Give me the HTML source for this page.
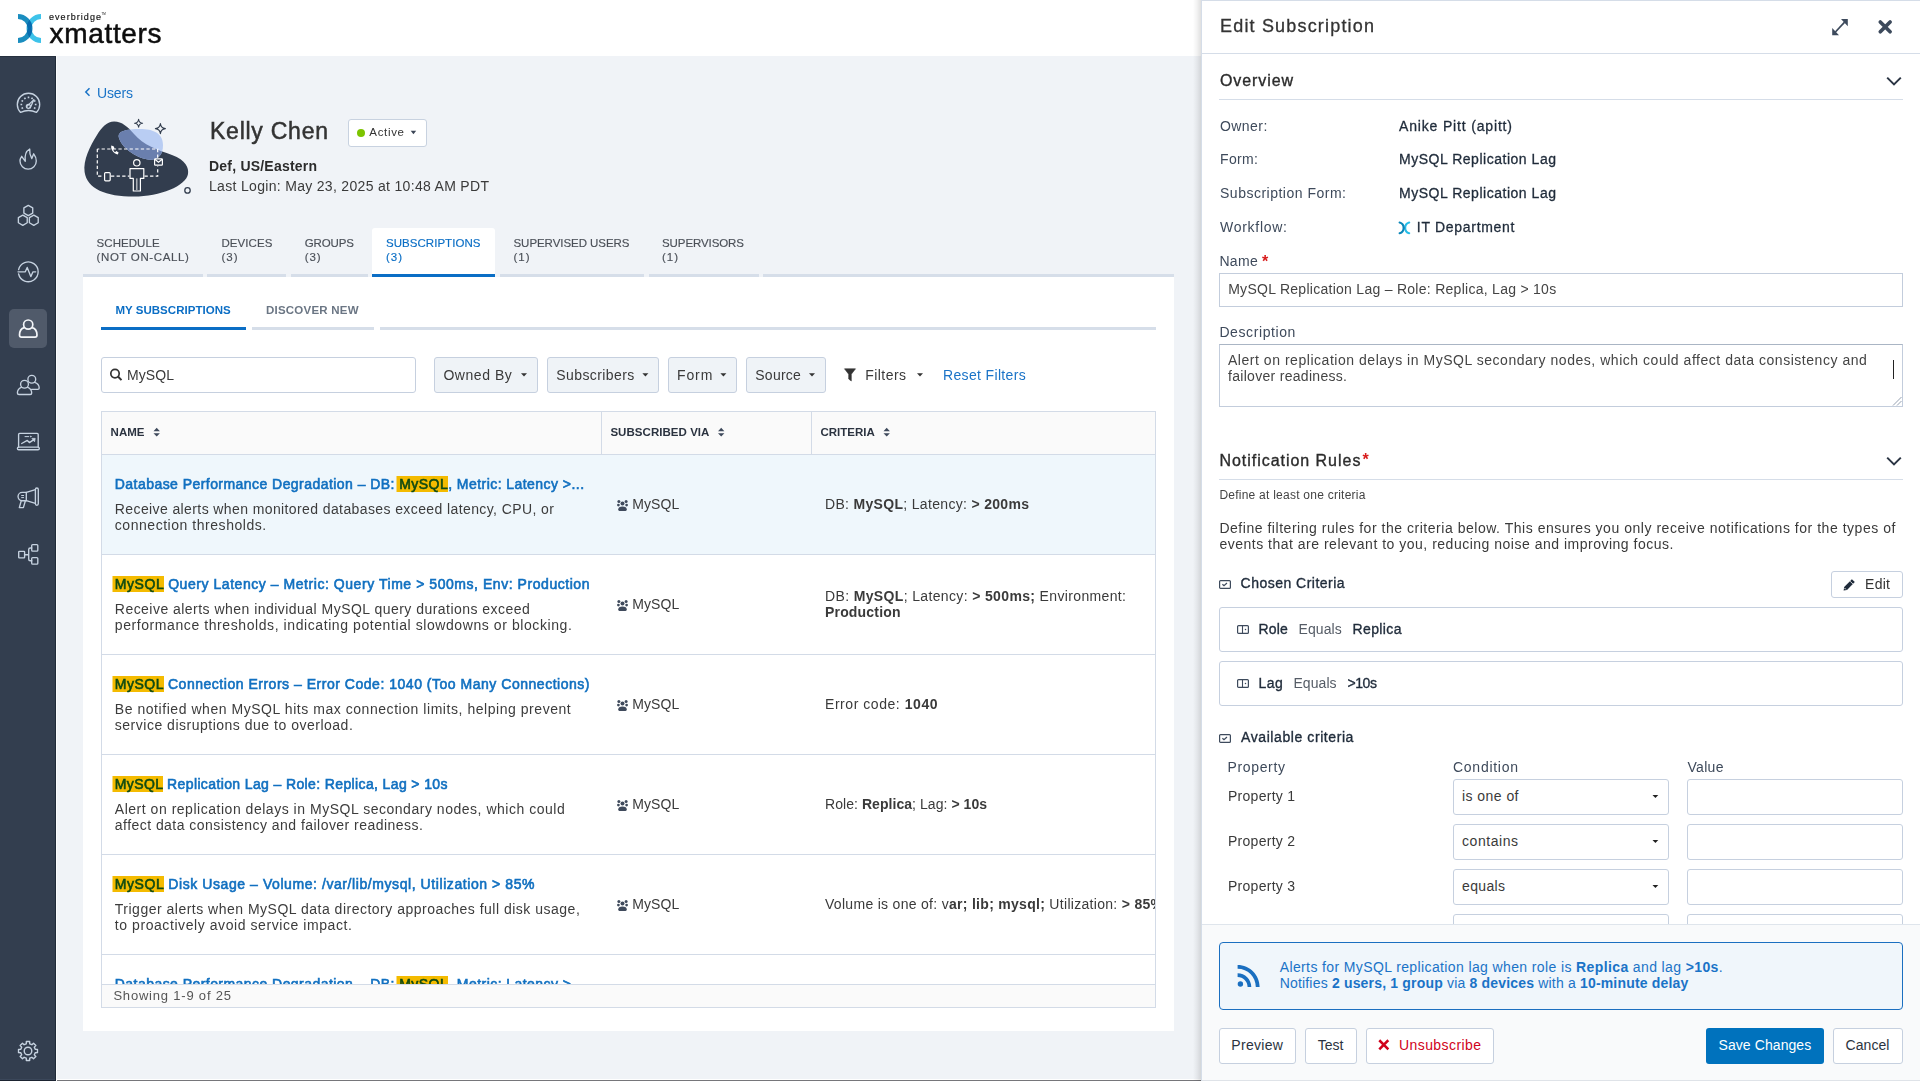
<!DOCTYPE html><html><head><meta charset="utf-8"><style>
html,body{margin:0;padding:0;}
body{width:1920px;height:1081px;overflow:hidden;position:relative;background:#f0f3f7;font-family:"Liberation Sans",sans-serif;-webkit-font-smoothing:antialiased;}
.t{position:absolute;white-space:nowrap;}
b{font-weight:bold;}
svg{position:absolute;overflow:visible;}
</style></head><body>
<div style="position:absolute;left:0px;top:0px;width:1920px;height:56px;background:#fff"></div>
<svg style="left:0;top:0" width="60" height="56">
<defs><clipPath id="lc"><rect x="17" y="14" width="25" height="29"/></clipPath></defs>
<g clip-path="url(#lc)" fill="none" stroke-width="5">
<path d="M41 16.5 A12 12 0 0 0 41 40.5" stroke="#3ec3ea"/>
<path d="M18 16.5 A12 12 0 0 1 18 40.5" stroke="#1a8dbf" style="mix-blend-mode:multiply"/>
</g></svg>
<div class="t" style="left:49px;top:12px;font-size:9px;line-height:10px;letter-spacing:1.052px;color:#111;-webkit-text-stroke:0.15px #111;">everbridge</div>
<div class="t" style="left:101.5px;top:13px;font-size:3px;line-height:3px;color:#111">TM</div>
<div class="t" style="left:49.6px;top:18px;font-size:28px;line-height:32px;letter-spacing:0.664px;color:#0d0d0d;-webkit-text-stroke:0.5px #0d0d0d;">xmatters</div>
<div style="position:absolute;left:0px;top:56px;width:56px;height:1025px;background:#333e4f"></div>
<div style="position:absolute;left:55px;top:56px;width:1px;height:1025px;background:#1f2a38"></div>
<div style="position:absolute;left:0px;top:56px;width:56px;height:1px;background:#27313f"></div>
<div style="position:absolute;left:56px;top:56px;width:1px;height:1025px;background:#fbfcfd"></div>
<div style="position:absolute;left:9px;top:309px;width:38px;height:39px;background:#505a6a;border-radius:5px"></div>
<svg style="left:0;top:0" width="56" height="600"><g fill="none" stroke="#c6d2e0" stroke-width="1.35" stroke-linecap="round" stroke-linejoin="round">
<path d="M20.6 112.4 A11.2 11.2 0 1 1 36.4 112.4 Q28.5 108.6 20.6 112.4 Z"/>
<path d="M23.04 107.65 L21.57 108.50 M22.20 104.50 L20.50 104.50 M23.04 101.35 L21.57 100.50 M25.35 99.04 L24.50 97.57 M28.50 98.20 L28.50 96.50 M31.65 99.04 L32.50 97.57 M33.96 101.35 L35.43 100.50 M34.80 104.50 L36.50 104.50 M33.96 107.65 L35.43 108.50" stroke-width="1.6" stroke-linecap="butt"/>
<path d="M26.6 106.6 L33.9 99.6 L30.2 107.9" stroke-width="1.3"/>
<circle cx="28.4" cy="106.3" r="2"/>
</g>
<g fill="none" stroke="#c6d2e0" stroke-width="1.35" stroke-linecap="round" stroke-linejoin="round">
<path d="M21.7 156.3 L25.3 161.3 C 24.6 156, 25.6 151.2, 29.7 149 C 29.4 153, 30.4 156.2, 31.8 158.6 L33.7 153.8 C 35.4 156, 36.3 158.8, 36.3 161 A 8.15 8.15 0 0 1 20 161 C 20 159.5, 20.6 157.8, 21.7 156.3 Z"/>
</g>
<g fill="none" stroke="#c6d2e0" stroke-width="1.35" stroke-linecap="round" stroke-linejoin="round">
<path d="M28.30 205.40 L32.72 207.95 L32.72 213.05 L28.30 215.60 L23.88 213.05 L23.88 207.95 Z"/>
<path d="M22.80 215.10 L27.22 217.65 L27.22 222.75 L22.80 225.30 L18.38 222.75 L18.38 217.65 Z"/>
<path d="M33.80 215.10 L38.22 217.65 L38.22 222.75 L33.80 225.30 L29.38 222.75 L29.38 217.65 Z"/>
</g>
<g fill="none" stroke="#c6d2e0" stroke-width="1.35" stroke-linecap="round" stroke-linejoin="round">
<path d="M18.6 269.6 A 9.9 9.9 0 1 1 18.6 274"/>
<path d="M18 271.8 H25.3 L27.2 267.4 L30.8 276.6 L33 271.8 H35.7"/>
</g>
<g fill="none" stroke="#f4f6f9" stroke-width="1.7" stroke-linejoin="round">
<circle cx="28.2" cy="324.6" r="4.6"/>
<path d="M24.3 327.6 C 21 328.5, 19.5 331, 19.5 335 C 19.5 336.5, 20.2 337.2, 21.5 337.2 H 35 C 36.3 337.2, 37 336.5, 37 335 C 37 331, 35.5 328.5, 32.1 327.6"/>
</g>
<g fill="none" stroke="#c6d2e0" stroke-width="1.35" stroke-linecap="round" stroke-linejoin="round">
<circle cx="31.8" cy="379.2" r="3.9"/>
<path d="M34.6 382.3 C 37.6 383.2, 39.2 385.6, 39.2 388 C 39.2 388.9, 38.7 389.4, 37.8 389.4 H 31.5"/>
<circle cx="24.5" cy="384.3" r="3.9"/>
<path d="M21.3 387.3 C 18.6 388.3, 17.4 390.6, 17.4 393 C 17.4 394, 18 394.5, 19 394.5 H 30.2 C 31.2 394.5, 31.7 394, 31.7 393 C 31.7 390.6, 30.4 388.3, 27.7 387.3"/>
</g>
<g fill="none" stroke="#c6d2e0" stroke-width="1.35" stroke-linecap="round" stroke-linejoin="round">
<path d="M18.6 447 V434.4 Q18.6 433.4 19.6 433.4 H37.2 Q38.2 433.4 38.2 434.4 V447"/>
<rect x="17.4" y="447.1" width="21.9" height="2.6" rx="1.3"/>
<path d="M21.7 443.5 L27.3 440.4 L29.4 442.6 L34.2 439.4" stroke-width="1.4"/>
<path d="M32.3 438.4 L35.2 438.4 L34.6 441.4 Z" fill="#c6d2e0" stroke-width="0.8"/>
<path d="M25 436.6 H28.6" stroke-width="1"/>
<circle cx="30.7" cy="436.6" r="0.5" fill="#c6d2e0" stroke-width="0.6"/>
</g>
<g fill="none" stroke="#c6d2e0" stroke-width="1.35" stroke-linecap="round" stroke-linejoin="round">
<path d="M26.3 492.4 L35.4 489.7 M26.3 500.7 L35.4 503.4"/>
<rect x="35.4" y="488" width="2.9" height="17.3" rx="1.45"/>
<path d="M26.3 492.4 V500.7 H22.2 A4.15 4.15 0 0 1 22.2 492.4 Z"/>
<path d="M21.2 501 L19.3 507.6 H23.4 L25.3 501"/>
<path d="M21.6 495.5 H23.6 M21.6 497.6 H23.6" stroke-width="1"/>
</g>
<g fill="none" stroke="#c6d2e0" stroke-width="1.35" stroke-linecap="round" stroke-linejoin="round">
<rect x="18.7" y="551.4" width="5.9" height="6.4" rx="0.6"/>
<rect x="31.7" y="544.6" width="6.1" height="6.6" rx="1"/>
<rect x="31.7" y="557.6" width="6.1" height="6.6" rx="1"/>
<path d="M24.6 554.7 H28.7 M31.7 548 H30.2 Q28.7 548 28.7 549.5 V559.2 Q28.7 560.7 30.2 560.7 H31.7"/>
</g>
</svg>
<svg style="left:0;top:1030" width="56" height="40"><g fill="none" stroke="#c6d2e0" stroke-width="1.4" stroke-linejoin="round">
<path d="M26.35 11.54 L29.65 11.54 L29.73 13.80 L31.87 14.69 L33.52 13.15 L35.85 15.48 L34.31 17.13 L35.20 19.27 L37.46 19.35 L37.46 22.65 L35.20 22.73 L34.31 24.87 L35.85 26.52 L33.52 28.85 L31.87 27.31 L29.73 28.20 L29.65 30.46 L26.35 30.46 L26.27 28.20 L24.13 27.31 L22.48 28.85 L20.15 26.52 L21.69 24.87 L20.80 22.73 L18.54 22.65 L18.54 19.35 L20.80 19.27 L21.69 17.13 L20.15 15.48 L22.48 13.15 L24.13 14.69 L26.27 13.80 Z"/>
<circle cx="28" cy="21" r="3.8"/>
</g></svg>
<svg style="left:0;top:0" width="100" height="100"><path d="M89.5 88.2 L85.8 92 L89.5 95.8" fill="none" stroke="#1a73c7" stroke-width="1.5"/></svg>
<div class="t" style="left:97px;top:84.6px;font-size:14px;line-height:16px;letter-spacing:-0.140px;color:#1a73c7;">Users</div>
<svg style="left:0;top:0" width="200" height="210">
<defs><clipPath id="bc"><path id="blobp" d="M114.2 121.5 C 122 121.5, 128 127, 134 134 C 143 145, 158 150, 172 155 C 186 160, 189 168, 188 174 C 186 186, 160 196.6, 134 196.6 C 106 196.6, 87 189, 84.6 172 C 83 160, 90 146, 97 135 C 102 127, 107 121.5, 114.2 121.5 Z"/></clipPath></defs>
<path d="M114.2 121.5 C 122 121.5, 128 127, 134 134 C 143 145, 158 150, 172 155 C 186 160, 189 168, 188 174 C 186 186, 160 196.6, 134 196.6 C 106 196.6, 87 189, 84.6 172 C 83 160, 90 146, 97 135 C 102 127, 107 121.5, 114.2 121.5 Z" fill="#323d4e"/>
<path id="lb" d="M119 138 C 117 131, 126 129, 140 129 C 153 129, 163 133, 163 145 C 163 155, 158 160, 150 159.7 C 139 159.3, 122 149, 119 138 Z" fill="#b9cdf3"/>
<g clip-path="url(#bc)"><path d="M119 138 C 117 131, 126 129, 140 129 C 153 129, 163 133, 163 145 C 163 155, 158 160, 150 159.7 C 139 159.3, 122 149, 119 138 Z" fill="#6a7fae"/></g>
<g fill="none" stroke="#fff" stroke-width="1.2">
<path d="M97.3 149 V 176.2 H 103.5 M111 176.2 H 129.3 M144.5 176.2 H 157.7 V 166.5 M157.7 157.8 V 149 H 97.3" stroke-dasharray="3.3 2.3"/>
<circle cx="136.8" cy="162.8" r="3.2"/>
<path d="M133.3 191 V 178.4 H 130 V 168.6 H 143.8 V 178.4 H 140.4 V 191 Z" stroke-linejoin="round"/>
<path d="M136.85 178.4 V 190" stroke-width="0.9"/>
<rect x="104.6" y="172.6" width="5.6" height="8.2" rx="1"/>
<rect x="154.6" y="158.8" width="7.8" height="6.4" rx="0.8"/>
<path d="M154.8 159.2 L158.5 162.3 L162.2 159.2"/>
</g>
<path d="M111.3 145.6 C 110.5 149.5, 113.5 153.6, 117.8 154.5 L 118.6 152.6 L 116.4 151 L 115 152.2 C 114 151.4, 113.5 150.6, 113.2 149.6 L 114.6 148.6 L 113.6 146.2 Z" fill="#fff"/>
<g fill="none" stroke="#323d4e" stroke-width="1.1" stroke-linejoin="round">
<path d="M138.6 119.3 Q139 122.9 142.6 123.3 Q139 123.7 138.6 127.3 Q138.2 123.7 134.6 123.3 Q138.2 122.9 138.6 119.3 Z"/>
<path d="M160.4 123.6 Q160.9 128.1 165.4 128.6 Q160.9 129.1 160.4 133.6 Q159.9 129.1 155.4 128.6 Q159.9 128.1 160.4 123.6 Z"/>
<circle cx="187.5" cy="190.4" r="2.7" stroke-width="1.3"/>
</g>
</svg>
<div class="t" style="left:210px;top:117.5px;font-size:23px;line-height:26px;letter-spacing:0.752px;color:#333;-webkit-text-stroke:0.5px #333;">Kelly Chen</div>
<div style="position:absolute;left:348px;top:119px;width:77px;height:26px;background:#fff;border:1px solid #c8d2e0;border-radius:3px"></div>
<div style="position:absolute;left:356.8px;top:128.7px;width:8px;height:8px;border-radius:50%;background:#7cc400"></div>
<div class="t" style="left:369.3px;top:125px;font-size:11.5px;line-height:14px;letter-spacing:0.677px;color:#333;">Active</div>
<svg style="left:0;top:0" width="430" height="140"><path d="M410.7 130.8 H416.2 L413.45 134.2 Z" fill="#3c4656"/></svg>
<div class="t" style="left:209px;top:158px;font-size:14px;line-height:16px;letter-spacing:0.212px;color:#2b2b2b;font-weight:bold;">Def, US/Eastern</div>
<div class="t" style="left:209px;top:178px;font-size:14px;line-height:16px;letter-spacing:0.315px;color:#3a3a3a;">Last Login: May 23, 2025 at 10:48 AM PDT</div>
<div style="position:absolute;left:372px;top:228px;width:123px;height:49px;background:#fff;border-radius:3px 3px 0 0"></div>
<div style="position:absolute;left:83px;top:274px;width:120px;height:3px;background:#d6dee9"></div>
<div style="position:absolute;left:207px;top:274px;width:79px;height:3px;background:#d6dee9"></div>
<div style="position:absolute;left:291px;top:274px;width:77px;height:3px;background:#d6dee9"></div>
<div style="position:absolute;left:500px;top:274px;width:144px;height:3px;background:#d6dee9"></div>
<div style="position:absolute;left:648.5px;top:274px;width:110px;height:3px;background:#d6dee9"></div>
<div style="position:absolute;left:763px;top:274px;width:411px;height:3px;background:#d6dee9"></div>
<div style="position:absolute;left:372px;top:274px;width:123px;height:3px;background:#0b6ec5"></div>
<div class="t" style="left:96.6px;top:235.7px;font-size:11.5px;line-height:14px;letter-spacing:0.053px;color:#4b5058;-webkit-text-stroke:0.15px #4b5058;">SCHEDULE</div>
<div class="t" style="left:96.6px;top:249.9px;font-size:11.5px;line-height:14px;letter-spacing:0.627px;color:#4b5058;-webkit-text-stroke:0.15px #4b5058;">(NOT ON-CALL)</div>
<div class="t" style="left:221.5px;top:235.7px;font-size:11.5px;line-height:14px;letter-spacing:0.052px;color:#4b5058;-webkit-text-stroke:0.15px #4b5058;">DEVICES</div>
<div class="t" style="left:221.5px;top:249.9px;font-size:11.5px;line-height:14px;letter-spacing:0.972px;color:#4b5058;-webkit-text-stroke:0.15px #4b5058;">(3)</div>
<div class="t" style="left:304.7px;top:235.7px;font-size:11.5px;line-height:14px;letter-spacing:-0.108px;color:#4b5058;-webkit-text-stroke:0.15px #4b5058;">GROUPS</div>
<div class="t" style="left:304.7px;top:249.9px;font-size:11.5px;line-height:14px;letter-spacing:0.972px;color:#4b5058;-webkit-text-stroke:0.15px #4b5058;">(3)</div>
<div class="t" style="left:386px;top:235.7px;font-size:11.5px;line-height:14px;letter-spacing:0.039px;color:#0b6ec5;-webkit-text-stroke:0.15px #0b6ec5;">SUBSCRIPTIONS</div>
<div class="t" style="left:386px;top:249.9px;font-size:11.5px;line-height:14px;letter-spacing:0.972px;color:#0b6ec5;-webkit-text-stroke:0.15px #0b6ec5;">(3)</div>
<div class="t" style="left:513.5px;top:235.7px;font-size:11.5px;line-height:14px;letter-spacing:-0.050px;color:#4b5058;-webkit-text-stroke:0.15px #4b5058;">SUPERVISED USERS</div>
<div class="t" style="left:513.5px;top:249.9px;font-size:11.5px;line-height:14px;letter-spacing:0.972px;color:#4b5058;-webkit-text-stroke:0.15px #4b5058;">(1)</div>
<div class="t" style="left:662px;top:235.7px;font-size:11.5px;line-height:14px;letter-spacing:-0.087px;color:#4b5058;-webkit-text-stroke:0.15px #4b5058;">SUPERVISORS</div>
<div class="t" style="left:662px;top:249.9px;font-size:11.5px;line-height:14px;letter-spacing:0.972px;color:#4b5058;-webkit-text-stroke:0.15px #4b5058;">(1)</div>
<div style="position:absolute;left:83px;top:277px;width:1091px;height:754px;background:#fff"></div>
<div style="position:absolute;left:101px;top:327px;width:145px;height:3px;background:#0b6ec5"></div>
<div style="position:absolute;left:252px;top:327px;width:122px;height:3px;background:#d6dee9"></div>
<div style="position:absolute;left:380px;top:327px;width:776px;height:3px;background:#d6dee9"></div>
<div class="t" style="left:115.4px;top:303px;font-size:11.5px;line-height:14px;letter-spacing:0.033px;color:#0b6ec5;font-weight:bold;">MY SUBSCRIPTIONS</div>
<div class="t" style="left:266px;top:303px;font-size:11.5px;line-height:14px;letter-spacing:0.219px;color:#6b7684;font-weight:bold;">DISCOVER NEW</div>
<div style="position:absolute;left:101px;top:357px;width:313px;height:34px;background:#fff;border:1px solid #c6d0df;border-radius:3px"></div>
<svg style="left:0;top:0" width="200" height="400"><g fill="none" stroke="#333" stroke-width="1.7"><circle cx="115" cy="373.6" r="4.2"/><path d="M118.2 376.8 L121.5 380.1" stroke-width="2"/></g></svg>
<div class="t" style="left:127px;top:366.7px;font-size:14px;line-height:16px;letter-spacing:0.081px;color:#3a3a3a;">MySQL</div>
<div style="position:absolute;left:434px;top:357px;width:102px;height:34px;background:#eff3f7;border:1px solid #c6d0df;border-radius:3px"></div>
<div class="t" style="left:443.4px;top:366.7px;font-size:14px;line-height:16px;letter-spacing:0.545px;color:#3a3a3a;">Owned By</div>
<div style="position:absolute;left:547px;top:357px;width:110px;height:34px;background:#eff3f7;border:1px solid #c6d0df;border-radius:3px"></div>
<div class="t" style="left:556.3px;top:366.7px;font-size:14px;line-height:16px;letter-spacing:0.408px;color:#3a3a3a;">Subscribers</div>
<div style="position:absolute;left:668px;top:357px;width:67px;height:34px;background:#eff3f7;border:1px solid #c6d0df;border-radius:3px"></div>
<div class="t" style="left:677px;top:366.7px;font-size:14px;line-height:16px;letter-spacing:0.879px;color:#3a3a3a;">Form</div>
<div style="position:absolute;left:746px;top:357px;width:78px;height:34px;background:#eff3f7;border:1px solid #c6d0df;border-radius:3px"></div>
<div class="t" style="left:755.3px;top:366.7px;font-size:14px;line-height:16px;letter-spacing:0.228px;color:#3a3a3a;">Source</div>
<svg style="left:0;top:0" width="1100" height="400"><path d="M521 373.3 H527 L524 376.5 Z" fill="#333"/><path d="M642.4 373.3 H648.4 L645.4 376.5 Z" fill="#333"/><path d="M720.4 373.3 H726.4 L723.4 376.5 Z" fill="#333"/><path d="M809 373.3 H815 L812 376.5 Z" fill="#333"/><path d="M917 373.3 H923 L920 376.5 Z" fill="#333"/><path d="M844.5 368.8 H855.5 L851.3 374.2 V381 L848.7 379 V374.2 Z" fill="#333" stroke="#333" stroke-width="0.6" stroke-linejoin="round"/></svg>
<div class="t" style="left:865.3px;top:366.7px;font-size:14px;line-height:16px;letter-spacing:0.431px;color:#3a3a3a;">Filters</div>
<div class="t" style="left:943px;top:366.7px;font-size:14px;line-height:16px;letter-spacing:0.344px;color:#1a73c7;">Reset Filters</div>
<div style="position:absolute;left:101px;top:411px;width:1055px;height:597px;border:1px solid #d3dbe7;box-sizing:border-box;background:#fff"></div>
<div style="position:absolute;left:102px;top:412px;width:1053px;height:42px;background:#fafafa"></div>
<div style="position:absolute;left:102px;top:454px;width:1053px;height:1px;background:#d3dbe7"></div>
<div style="position:absolute;left:601px;top:412px;width:1px;height:42px;background:#d3dbe7"></div>
<div style="position:absolute;left:811px;top:412px;width:1px;height:42px;background:#d3dbe7"></div>
<div class="t" style="left:110.6px;top:425.4px;font-size:11.5px;line-height:14px;letter-spacing:-0.020px;color:#2b3340;font-weight:bold;">NAME</div>
<div class="t" style="left:610.4px;top:425.4px;font-size:11.5px;line-height:14px;letter-spacing:0.046px;color:#2b3340;font-weight:bold;">SUBSCRIBED VIA</div>
<div class="t" style="left:820.4px;top:425.4px;font-size:11.5px;line-height:14px;letter-spacing:0.013px;color:#2b3340;font-weight:bold;">CRITERIA</div>
<svg style="left:0;top:0" width="1000" height="460"><path d="M153.5 431.2 L156.7 427.8 L159.9 431.2 Z M153.5 433.2 L156.7 436.6 L159.9 433.2 Z" fill="#3f4a5c"/><path d="M718 431.2 L721.2 427.8 L724.4 431.2 Z M718 433.2 L721.2 436.6 L724.4 433.2 Z" fill="#3f4a5c"/><path d="M883.5 431.2 L886.7 427.8 L889.9 431.2 Z M883.5 433.2 L886.7 436.6 L889.9 433.2 Z" fill="#3f4a5c"/></svg>
<div style="position:absolute;left:102px;top:455px;width:1053px;height:529px;overflow:hidden">
<div style="position:absolute;left:0px;top:0px;width:1053px;height:99px;background:#eff7fc"></div>
<div style="position:absolute;left:0px;top:99px;width:1053px;height:1px;background:#d3dbe7"></div>
<div class="t" style="left:12.8px;top:21px;font-size:14px;line-height:16px;letter-spacing:0.449px;color:#1170c0;-webkit-text-stroke:0.6px #1170c0;">Database Performance Degradation – DB: <span style="background:#f4bb00;color:#0f4a12;-webkit-text-stroke:0.6px #0f4a12;box-shadow:-2.5px 0 0 #f4bb00">MySQL</span>, Metric: Latency &gt;...</div>
<div class="t" style="left:12.8px;top:46px;font-size:14px;line-height:16px;letter-spacing:0.395px;color:#3c3c3c;">Receive alerts when monitored databases exceed latency, CPU, or</div>
<div class="t" style="left:12.8px;top:62px;font-size:14px;line-height:16px;letter-spacing:0.538px;color:#3c3c3c;">connection thresholds.</div>
<svg style="left:514.8px;top:44.5px" width="11" height="11" viewBox="0 0 11 11"><g fill="#3f4a5c"><circle cx="1.9" cy="1.6" r="1.5"/><circle cx="9.1" cy="1.6" r="1.5"/><circle cx="1.4" cy="5.1" r="1.35"/><circle cx="9.6" cy="5.1" r="1.35"/><circle cx="5.5" cy="3.6" r="2"/><path d="M1.2 9.6 C1.2 7.6, 2.8 6.4, 5.5 6.4 C8.2 6.4, 9.8 7.6, 9.8 9.6 Q9.8 10.9 8.6 10.9 H2.4 Q1.2 10.9 1.2 9.6 Z"/></g></svg>
<div class="t" style="left:530.3px;top:41.2px;font-size:14px;line-height:16px;letter-spacing:0.081px;color:#3a3a3a;">MySQL</div>
<div class="t" style="left:723px;top:41px;font-size:14px;line-height:16px;letter-spacing:0.319px;color:#3a3a3a;">DB: <b>MySQL</b>; Latency: <b>&gt; 200ms</b></div>
<div style="position:absolute;left:0px;top:199px;width:1053px;height:1px;background:#d3dbe7"></div>
<div class="t" style="left:12.8px;top:121px;font-size:14px;line-height:16px;letter-spacing:0.550px;color:#1170c0;-webkit-text-stroke:0.6px #1170c0;"><span style="background:#f4bb00;color:#0f4a12;-webkit-text-stroke:0.6px #0f4a12;box-shadow:-2.5px 0 0 #f4bb00">MySQL</span> Query Latency – Metric: Query Time &gt; 500ms, Env: Production</div>
<div class="t" style="left:12.8px;top:146px;font-size:14px;line-height:16px;letter-spacing:0.469px;color:#3c3c3c;">Receive alerts when individual MySQL query durations exceed</div>
<div class="t" style="left:12.8px;top:162px;font-size:14px;line-height:16px;letter-spacing:0.581px;color:#3c3c3c;">performance thresholds, indicating potential slowdowns or blocking.</div>
<svg style="left:514.8px;top:144.5px" width="11" height="11" viewBox="0 0 11 11"><g fill="#3f4a5c"><circle cx="1.9" cy="1.6" r="1.5"/><circle cx="9.1" cy="1.6" r="1.5"/><circle cx="1.4" cy="5.1" r="1.35"/><circle cx="9.6" cy="5.1" r="1.35"/><circle cx="5.5" cy="3.6" r="2"/><path d="M1.2 9.6 C1.2 7.6, 2.8 6.4, 5.5 6.4 C8.2 6.4, 9.8 7.6, 9.8 9.6 Q9.8 10.9 8.6 10.9 H2.4 Q1.2 10.9 1.2 9.6 Z"/></g></svg>
<div class="t" style="left:530.3px;top:141.2px;font-size:14px;line-height:16px;letter-spacing:0.081px;color:#3a3a3a;">MySQL</div>
<div class="t" style="left:723px;top:133px;font-size:14px;line-height:16px;letter-spacing:0.356px;color:#3a3a3a;">DB: <b>MySQL</b>; Latency: <b>&gt; 500ms;</b> Environment:</div>
<div class="t" style="left:723px;top:149px;font-size:14px;line-height:16px;letter-spacing:0.179px;color:#3a3a3a;"><b>Production</b></div>
<div style="position:absolute;left:0px;top:299px;width:1053px;height:1px;background:#d3dbe7"></div>
<div class="t" style="left:12.8px;top:221px;font-size:14px;line-height:16px;letter-spacing:0.519px;color:#1170c0;-webkit-text-stroke:0.6px #1170c0;"><span style="background:#f4bb00;color:#0f4a12;-webkit-text-stroke:0.6px #0f4a12;box-shadow:-2.5px 0 0 #f4bb00">MySQL</span> Connection Errors – Error Code: 1040 (Too Many Connections)</div>
<div class="t" style="left:12.8px;top:246px;font-size:14px;line-height:16px;letter-spacing:0.546px;color:#3c3c3c;">Be notified when MySQL hits max connection limits, helping prevent</div>
<div class="t" style="left:12.8px;top:262px;font-size:14px;line-height:16px;letter-spacing:0.507px;color:#3c3c3c;">service disruptions due to overload.</div>
<svg style="left:514.8px;top:244.5px" width="11" height="11" viewBox="0 0 11 11"><g fill="#3f4a5c"><circle cx="1.9" cy="1.6" r="1.5"/><circle cx="9.1" cy="1.6" r="1.5"/><circle cx="1.4" cy="5.1" r="1.35"/><circle cx="9.6" cy="5.1" r="1.35"/><circle cx="5.5" cy="3.6" r="2"/><path d="M1.2 9.6 C1.2 7.6, 2.8 6.4, 5.5 6.4 C8.2 6.4, 9.8 7.6, 9.8 9.6 Q9.8 10.9 8.6 10.9 H2.4 Q1.2 10.9 1.2 9.6 Z"/></g></svg>
<div class="t" style="left:530.3px;top:241.2px;font-size:14px;line-height:16px;letter-spacing:0.081px;color:#3a3a3a;">MySQL</div>
<div class="t" style="left:723px;top:241px;font-size:14px;line-height:16px;letter-spacing:0.548px;color:#3a3a3a;">Error code: <b>1040</b></div>
<div style="position:absolute;left:0px;top:399px;width:1053px;height:1px;background:#d3dbe7"></div>
<div class="t" style="left:12.8px;top:321px;font-size:14px;line-height:16px;letter-spacing:0.375px;color:#1170c0;-webkit-text-stroke:0.6px #1170c0;"><span style="background:#f4bb00;color:#0f4a12;-webkit-text-stroke:0.6px #0f4a12;box-shadow:-2.5px 0 0 #f4bb00">MySQL</span> Replication Lag – Role: Replica, Lag &gt; 10s</div>
<div class="t" style="left:12.8px;top:346px;font-size:14px;line-height:16px;letter-spacing:0.522px;color:#3c3c3c;">Alert on replication delays in MySQL secondary nodes, which could</div>
<div class="t" style="left:12.8px;top:362px;font-size:14px;line-height:16px;letter-spacing:0.458px;color:#3c3c3c;">affect data consistency and failover readiness.</div>
<svg style="left:514.8px;top:344.5px" width="11" height="11" viewBox="0 0 11 11"><g fill="#3f4a5c"><circle cx="1.9" cy="1.6" r="1.5"/><circle cx="9.1" cy="1.6" r="1.5"/><circle cx="1.4" cy="5.1" r="1.35"/><circle cx="9.6" cy="5.1" r="1.35"/><circle cx="5.5" cy="3.6" r="2"/><path d="M1.2 9.6 C1.2 7.6, 2.8 6.4, 5.5 6.4 C8.2 6.4, 9.8 7.6, 9.8 9.6 Q9.8 10.9 8.6 10.9 H2.4 Q1.2 10.9 1.2 9.6 Z"/></g></svg>
<div class="t" style="left:530.3px;top:341.2px;font-size:14px;line-height:16px;letter-spacing:0.081px;color:#3a3a3a;">MySQL</div>
<div class="t" style="left:723px;top:341px;font-size:14px;line-height:16px;letter-spacing:0.054px;color:#3a3a3a;">Role: <b>Replica</b>; Lag: <b>&gt; 10s</b></div>
<div style="position:absolute;left:0px;top:499px;width:1053px;height:1px;background:#d3dbe7"></div>
<div class="t" style="left:12.8px;top:421px;font-size:14px;line-height:16px;letter-spacing:0.574px;color:#1170c0;-webkit-text-stroke:0.6px #1170c0;"><span style="background:#f4bb00;color:#0f4a12;-webkit-text-stroke:0.6px #0f4a12;box-shadow:-2.5px 0 0 #f4bb00">MySQL</span> Disk Usage – Volume: /var/lib/mysql, Utilization &gt; 85%</div>
<div class="t" style="left:12.8px;top:446px;font-size:14px;line-height:16px;letter-spacing:0.498px;color:#3c3c3c;">Trigger alerts when MySQL data directory approaches full disk usage,</div>
<div class="t" style="left:12.8px;top:462px;font-size:14px;line-height:16px;letter-spacing:0.569px;color:#3c3c3c;">to proactively avoid service impact.</div>
<svg style="left:514.8px;top:444.5px" width="11" height="11" viewBox="0 0 11 11"><g fill="#3f4a5c"><circle cx="1.9" cy="1.6" r="1.5"/><circle cx="9.1" cy="1.6" r="1.5"/><circle cx="1.4" cy="5.1" r="1.35"/><circle cx="9.6" cy="5.1" r="1.35"/><circle cx="5.5" cy="3.6" r="2"/><path d="M1.2 9.6 C1.2 7.6, 2.8 6.4, 5.5 6.4 C8.2 6.4, 9.8 7.6, 9.8 9.6 Q9.8 10.9 8.6 10.9 H2.4 Q1.2 10.9 1.2 9.6 Z"/></g></svg>
<div class="t" style="left:530.3px;top:441.2px;font-size:14px;line-height:16px;letter-spacing:0.081px;color:#3a3a3a;">MySQL</div>
<div class="t" style="left:723px;top:441px;font-size:14px;line-height:16px;letter-spacing:0.297px;color:#3a3a3a;">Volume is one of: v<b>ar; lib; mysql;</b> Utilization: <b>&gt; 85%</b></div>
<div style="position:absolute;left:0px;top:599px;width:1053px;height:1px;background:#d3dbe7"></div>
<div class="t" style="left:12.8px;top:521px;font-size:14px;line-height:16px;letter-spacing:0.449px;color:#1170c0;-webkit-text-stroke:0.6px #1170c0;">Database Performance Degradation – DB: <span style="background:#f4bb00;color:#0f4a12;-webkit-text-stroke:0.6px #0f4a12;box-shadow:-2.5px 0 0 #f4bb00">MySQL</span>, Metric: Latency &gt;...</div>
</div>
<div style="position:absolute;left:102px;top:984px;width:1053px;height:1px;background:#d3dbe7"></div>
<div style="position:absolute;left:102px;top:985px;width:1053px;height:22px;background:#fafafa"></div>
<div class="t" style="left:113.4px;top:987.7px;font-size:13px;line-height:16px;letter-spacing:0.800px;color:#555;">Showing 1-9 of 25</div>
<div style="position:absolute;left:57px;top:1079px;width:1144px;height:1px;background:#fff"></div>
<div style="position:absolute;left:57px;top:1080px;width:1144px;height:1px;background:#76767a"></div>
<div style="position:absolute;left:0px;top:1079px;width:55px;height:1px;background:#3b475a"></div>
<div style="position:absolute;left:0px;top:1080px;width:56px;height:1px;background:#1b2330"></div>
<div style="position:absolute;left:1193px;top:0px;width:8px;height:1081px;background:linear-gradient(to right, rgba(0,0,0,0), rgba(0,0,0,0.05) 50%, rgba(0,0,0,0.12))"></div>
<div style="position:absolute;left:1201px;top:0px;width:719px;height:1081px;background:#fff"></div>
<div style="position:absolute;left:1201px;top:0px;width:1px;height:1081px;background:#d5dde8"></div>
<div style="position:absolute;left:1201px;top:0px;width:719px;height:1px;background:#d5dde8"></div>
<div class="t" style="left:1220px;top:15.8px;font-size:18px;line-height:20px;letter-spacing:1.183px;color:#333;-webkit-text-stroke:0.3px #333;">Edit Subscription</div>
<svg style="left:0;top:0" width="1920" height="120">
<g fill="#3d4a5c">
<path d="M1847.8 19 V26.2 L1841 19 Z M1832.2 35.2 V28 L1839 35.2 Z"/>
</g>
<path d="M1844.6 22.2 L1835.4 32" stroke="#3d4a5c" stroke-width="1.7"/>
<path d="M1880.3 22 L1890.1 31.8 M1890.1 22 L1880.3 31.8" stroke="#3d4a5c" stroke-width="3.7" stroke-linecap="round"/>
<path d="M1887.2 77.6 L1894 84.4 L1900.8 77.6" fill="none" stroke="#2b3544" stroke-width="2"/>
</g></svg>
<div style="position:absolute;left:1201px;top:53px;width:719px;height:1px;background:#d5dde8"></div>
<div class="t" style="left:1220px;top:72px;font-size:16px;line-height:18px;letter-spacing:0.903px;color:#2b2b2b;-webkit-text-stroke:0.35px #2b2b2b;">Overview</div>
<div style="position:absolute;left:1219px;top:99px;width:684px;height:1px;background:#d5dde8"></div>
<div class="t" style="left:1220px;top:117.5px;font-size:14px;line-height:16px;letter-spacing:0.435px;color:#3e4a5b;">Owner:</div>
<div class="t" style="left:1399px;top:117.5px;font-size:14px;line-height:16px;letter-spacing:0.834px;color:#1f2b3a;-webkit-text-stroke:0.3px #1f2b3a;">Anike Pitt (apitt)</div>
<div class="t" style="left:1220px;top:151.2px;font-size:14px;line-height:16px;letter-spacing:0.362px;color:#3e4a5b;">Form:</div>
<div class="t" style="left:1399px;top:151.2px;font-size:14px;line-height:16px;letter-spacing:0.522px;color:#1f2b3a;-webkit-text-stroke:0.3px #1f2b3a;">MySQL Replication Lag</div>
<div class="t" style="left:1220px;top:185.2px;font-size:14px;line-height:16px;letter-spacing:0.501px;color:#3e4a5b;">Subscription Form:</div>
<div class="t" style="left:1399px;top:185.2px;font-size:14px;line-height:16px;letter-spacing:0.522px;color:#1f2b3a;-webkit-text-stroke:0.3px #1f2b3a;">MySQL Replication Lag</div>
<div class="t" style="left:1220px;top:219px;font-size:14px;line-height:16px;letter-spacing:0.725px;color:#3e4a5b;">Workflow:</div>
<svg style="left:1398px;top:221px" width="14" height="14" viewBox="0 0 14 14"><g fill="none" stroke-width="2.1" stroke-linecap="round">
<path d="M11.2 1.6 A5.5 5.5 0 0 0 11.2 12.2" stroke="#27bde8"/>
<path d="M1.6 1.6 A5.5 5.5 0 0 1 1.6 12.2" stroke="#0a86b8" style="mix-blend-mode:multiply"/></g></svg>
<div class="t" style="left:1416.8px;top:219px;font-size:14px;line-height:16px;letter-spacing:0.706px;color:#1f2b3a;-webkit-text-stroke:0.3px #1f2b3a;">IT Department</div>
<div class="t" style="left:1219.4px;top:253.25px;font-size:14px;line-height:16px;letter-spacing:0.351px;color:#3e4a5b;">Name</div>
<div class="t" style="left:1262px;top:254px;font-size:16px;line-height:16px;color:#d81b1b;font-weight:bold">*</div>
<div style="position:absolute;left:1219px;top:273px;width:684px;height:34px;border:1px solid #c3cddc;box-sizing:border-box;background:#fff"></div>
<div class="t" style="left:1228.2px;top:281.4px;font-size:14px;line-height:16px;letter-spacing:0.275px;color:#444;">MySQL Replication Lag – Role: Replica, Lag &gt; 10s</div>
<div class="t" style="left:1219.4px;top:324px;font-size:14px;line-height:16px;letter-spacing:0.597px;color:#3e4a5b;">Description</div>
<div style="position:absolute;left:1219px;top:344px;width:684px;height:63px;border:1px solid #c3cddc;border-top-color:#aab5c4;box-sizing:border-box;background:#fff"></div>
<div class="t" style="left:1228px;top:351.7px;font-size:14px;line-height:16px;letter-spacing:0.532px;color:#444;">Alert on replication delays in MySQL secondary nodes, which could affect data consistency and</div>
<div class="t" style="left:1228px;top:367.6px;font-size:14px;line-height:16px;letter-spacing:0.299px;color:#444;">failover readiness.</div>
<div style="position:absolute;left:1893px;top:359.5px;width:1.3px;height:19.5px;background:#222"></div>
<svg style="left:0;top:0" width="1920" height="420"><path d="M1901.5 397 L1893 405.5 M1901.5 401 L1897 405.5" stroke="#8a96a8" stroke-width="0.9"/></svg>
<div class="t" style="left:1219.4px;top:452px;font-size:16px;line-height:18px;letter-spacing:0.970px;color:#2b2b2b;-webkit-text-stroke:0.35px #2b2b2b;">Notification Rules</div>
<div class="t" style="left:1362.5px;top:452px;font-size:16px;line-height:16px;color:#d81b1b;font-weight:bold">*</div>
<svg style="left:0;top:0" width="1920" height="480"><path d="M1887.2 457.6 L1894 464.4 L1900.8 457.6" fill="none" stroke="#2b3544" stroke-width="2"/></svg>
<div style="position:absolute;left:1219px;top:479px;width:684px;height:1px;background:#d5dde8"></div>
<div class="t" style="left:1219.4px;top:488.4px;font-size:12px;line-height:14px;letter-spacing:0.244px;color:#444;">Define at least one criteria</div>
<div class="t" style="left:1219.4px;top:520px;font-size:14px;line-height:16px;letter-spacing:0.529px;color:#3a3a3a;">Define filtering rules for the criteria below. This ensures you only receive notifications for the types of</div>
<div class="t" style="left:1219.4px;top:536px;font-size:14px;line-height:16px;letter-spacing:0.504px;color:#3a3a3a;">events that are relevant to you, reducing noise and improving focus.</div>
<svg style="left:1219px;top:580px" width="12" height="9" viewBox="0 0 12 9"><rect x="0.6" y="0.6" width="10.8" height="7.8" rx="1" fill="none" stroke="#3d4a5c" stroke-width="1.2"/><path d="M3.4 4.3 L5 5.8 L8 3" fill="none" stroke="#3d4a5c" stroke-width="1.2"/></svg>
<div class="t" style="left:1240.6px;top:575px;font-size:14px;line-height:16px;letter-spacing:0.481px;color:#1f2b3a;-webkit-text-stroke:0.35px #1f2b3a;">Chosen Criteria</div>
<div style="position:absolute;left:1831px;top:571px;width:72px;height:27px;border:1px solid #c6d0df;border-radius:3px;box-sizing:border-box;background:#fff"></div>
<svg style="left:0;top:0" width="1920" height="600"><path d="M1851.9 579.2 L1854.8 582.1 L1847 589.9 L1843.6 590.6 L1844.2 587 Z" fill="#1f2b3a"/><path d="M1850.1 581.2 L1852.9 584" stroke="#fff" stroke-width="0.8"/><path d="M1844.5 588 L1845.9 589.4" stroke="#fff" stroke-width="0.9"/></svg>
<div class="t" style="left:1865px;top:575.75px;font-size:14px;line-height:16px;letter-spacing:0.292px;color:#333;">Edit</div>
<div style="position:absolute;left:1219px;top:607px;width:684px;height:44.5px;border:1px solid #c6d0df;border-radius:3px;box-sizing:border-box;background:#fff"></div>
<svg style="left:1237px;top:625px" width="12" height="9" viewBox="0 0 12 9"><rect x="0.6" y="0.6" width="10.8" height="7.8" rx="1" fill="none" stroke="#3d4a5c" stroke-width="1.2"/><path d="M5.5 0.6 V8.4" stroke="#3d4a5c" stroke-width="1.1"/><circle cx="8.5" cy="4.4" r="0.75" fill="#3d4a5c"/></svg>
<div class="t" style="left:1258.4px;top:620.5px;font-size:14px;line-height:16px;letter-spacing:0.202px;color:#1f2b3a;-webkit-text-stroke:0.35px #1f2b3a;">Role</div>
<div class="t" style="left:1298.5px;top:620.5px;font-size:14px;line-height:16px;letter-spacing:0.098px;color:#555c66;">Equals</div>
<div class="t" style="left:1352.5px;top:620.5px;font-size:14px;line-height:16px;letter-spacing:0.385px;color:#1f2b3a;-webkit-text-stroke:0.35px #1f2b3a;">Replica</div>
<div style="position:absolute;left:1219px;top:661px;width:684px;height:44.5px;border:1px solid #c6d0df;border-radius:3px;box-sizing:border-box;background:#fff"></div>
<svg style="left:1237px;top:679px" width="12" height="9" viewBox="0 0 12 9"><rect x="0.6" y="0.6" width="10.8" height="7.8" rx="1" fill="none" stroke="#3d4a5c" stroke-width="1.2"/><path d="M5.5 0.6 V8.4" stroke="#3d4a5c" stroke-width="1.1"/><circle cx="8.5" cy="4.4" r="0.75" fill="#3d4a5c"/></svg>
<div class="t" style="left:1258.4px;top:674.5px;font-size:14px;line-height:16px;letter-spacing:0.520px;color:#1f2b3a;-webkit-text-stroke:0.35px #1f2b3a;">Lag</div>
<div class="t" style="left:1293.4px;top:674.5px;font-size:14px;line-height:16px;letter-spacing:0.078px;color:#555c66;">Equals</div>
<div class="t" style="left:1347.4px;top:674.5px;font-size:14px;line-height:16px;letter-spacing:-0.416px;color:#1f2b3a;-webkit-text-stroke:0.35px #1f2b3a;">&gt;10s</div>
<svg style="left:1219px;top:733.5px" width="12" height="9" viewBox="0 0 12 9"><rect x="0.6" y="0.6" width="10.8" height="7.8" rx="1" fill="none" stroke="#3d4a5c" stroke-width="1.2"/><path d="M3.4 4.3 L5 5.8 L8 3" fill="none" stroke="#3d4a5c" stroke-width="1.2"/></svg>
<div class="t" style="left:1241px;top:728.5px;font-size:14px;line-height:16px;letter-spacing:0.585px;color:#1f2b3a;-webkit-text-stroke:0.35px #1f2b3a;">Available criteria</div>
<div class="t" style="left:1227.4px;top:758.6px;font-size:14px;line-height:16px;letter-spacing:0.670px;color:#3e4a5b;">Property</div>
<div class="t" style="left:1453px;top:758.8px;font-size:14px;line-height:16px;letter-spacing:0.731px;color:#3e4a5b;">Condition</div>
<div class="t" style="left:1687.5px;top:758.8px;font-size:14px;line-height:16px;letter-spacing:0.308px;color:#3e4a5b;">Value</div>
<div class="t" style="left:1228px;top:787.8px;font-size:14px;line-height:16px;letter-spacing:0.268px;color:#3a3a3a;">Property 1</div>
<div style="position:absolute;left:1453px;top:779px;width:216px;height:35.5px;border:1px solid #c6d0df;border-radius:3px;box-sizing:border-box;background:#fff"></div>
<div style="position:absolute;left:1687px;top:779px;width:216px;height:35.5px;border:1px solid #c6d0df;border-radius:3px;box-sizing:border-box;background:#fff"></div>
<div class="t" style="left:1462px;top:788.25px;font-size:14px;line-height:16px;letter-spacing:0.447px;color:#3a3a3a;">is one of</div>
<svg style="left:0;top:0" width="1920" height="1000"><path d="M1652.5 795 H1658.3 L1655.4 798 Z" fill="#222"/></svg>
<div class="t" style="left:1228px;top:832.8px;font-size:14px;line-height:16px;letter-spacing:0.268px;color:#3a3a3a;">Property 2</div>
<div style="position:absolute;left:1453px;top:824px;width:216px;height:35.5px;border:1px solid #c6d0df;border-radius:3px;box-sizing:border-box;background:#fff"></div>
<div style="position:absolute;left:1687px;top:824px;width:216px;height:35.5px;border:1px solid #c6d0df;border-radius:3px;box-sizing:border-box;background:#fff"></div>
<div class="t" style="left:1462px;top:833.25px;font-size:14px;line-height:16px;letter-spacing:0.551px;color:#3a3a3a;">contains</div>
<svg style="left:0;top:0" width="1920" height="1000"><path d="M1652.5 840 H1658.3 L1655.4 843 Z" fill="#222"/></svg>
<div class="t" style="left:1228px;top:877.8px;font-size:14px;line-height:16px;letter-spacing:0.268px;color:#3a3a3a;">Property 3</div>
<div style="position:absolute;left:1453px;top:869px;width:216px;height:35.5px;border:1px solid #c6d0df;border-radius:3px;box-sizing:border-box;background:#fff"></div>
<div style="position:absolute;left:1687px;top:869px;width:216px;height:35.5px;border:1px solid #c6d0df;border-radius:3px;box-sizing:border-box;background:#fff"></div>
<div class="t" style="left:1462px;top:878.25px;font-size:14px;line-height:16px;letter-spacing:0.349px;color:#3a3a3a;">equals</div>
<svg style="left:0;top:0" width="1920" height="1000"><path d="M1652.5 885 H1658.3 L1655.4 888 Z" fill="#222"/></svg>
<div style="position:absolute;left:1453px;top:914px;width:216px;height:35.5px;border:1px solid #c6d0df;border-radius:3px;box-sizing:border-box;background:#fff"></div>
<div style="position:absolute;left:1687px;top:914px;width:216px;height:35.5px;border:1px solid #c6d0df;border-radius:3px;box-sizing:border-box;background:#fff"></div>
<div style="position:absolute;left:1202px;top:924px;width:718px;height:157px;background:#f9fafb"></div>
<div style="position:absolute;left:1202px;top:924px;width:718px;height:1px;background:#dfe5ec"></div>
<div style="position:absolute;left:1219px;top:942px;width:684px;height:68px;border:1.5px solid #1b6fc0;border-radius:4px;box-sizing:border-box;background:#f0f6fb"></div>
<svg style="left:1237px;top:964px" width="24" height="24" viewBox="0 0 24 24"><g fill="#1a6fc0">
<circle cx="3.4" cy="20" r="2.7"/>
<path d="M0.6 9.3 C 8 9.3, 14.3 15.5, 14.3 23 H 10.6 C 10.6 17.5, 6.2 13, 0.6 13 Z"/>
<path d="M0.6 1 C 12.8 1, 22.6 10.8, 22.6 23 H 18.8 C 18.8 12.9, 10.7 4.8, 0.6 4.8 Z"/>
</g></svg>
<div class="t" style="left:1279.7px;top:958.8px;font-size:14px;line-height:16px;letter-spacing:0.382px;color:#1a73c7;">Alerts for MySQL replication lag when role is <b>Replica</b> and lag <b>&gt;10s</b>.</div>
<div class="t" style="left:1279.7px;top:974.75px;font-size:14px;line-height:16px;letter-spacing:0.180px;color:#1a73c7;">Notifies <b>2 users, 1 group</b> via <b>8 devices</b> with a <b>10-minute delay</b></div>
<div style="position:absolute;left:1219px;top:1028px;width:77px;height:36px;border:1px solid #c6d0df;border-radius:3px;box-sizing:border-box;background:#fff"></div>
<div class="t" style="left:1231.3px;top:1037px;font-size:14px;line-height:16px;letter-spacing:0.301px;color:#2b3340;">Preview</div>
<div style="position:absolute;left:1305px;top:1028px;width:52px;height:36px;border:1px solid #c6d0df;border-radius:3px;box-sizing:border-box;background:#fff"></div>
<div class="t" style="left:1317.75px;top:1037px;font-size:14px;line-height:16px;letter-spacing:0.008px;color:#2b3340;">Test</div>
<div style="position:absolute;left:1366px;top:1028px;width:128px;height:36px;border:1px solid #c6d0df;border-radius:3px;box-sizing:border-box;background:#fff"></div>
<div class="t" style="left:1399px;top:1037px;font-size:14px;line-height:16px;letter-spacing:0.418px;color:#d0021b;">Unsubscribe</div>
<div style="position:absolute;left:1833px;top:1028px;width:70px;height:36px;border:1px solid #c6d0df;border-radius:3px;box-sizing:border-box;background:#fff"></div>
<div class="t" style="left:1845.6px;top:1037px;font-size:14px;line-height:16px;letter-spacing:0.044px;color:#2b3340;">Cancel</div>
<svg style="left:0;top:0" width="1920" height="1081"><path d="M1380.2 1041.2 L1387.4 1048.4 M1387.4 1041.2 L1380.2 1048.4" stroke="#d0021b" stroke-width="2.6" stroke-linecap="square"/></svg>
<div style="position:absolute;left:1706px;top:1028px;width:118px;height:36px;background:#0072bd;border-radius:3px"></div>
<div class="t" style="left:1718.5px;top:1037px;font-size:14px;line-height:16px;letter-spacing:0.082px;color:#fff;">Save Changes</div>
<div style="position:absolute;left:1202px;top:1080px;width:718px;height:1px;background:#dfe3e8"></div>
</body></html>
